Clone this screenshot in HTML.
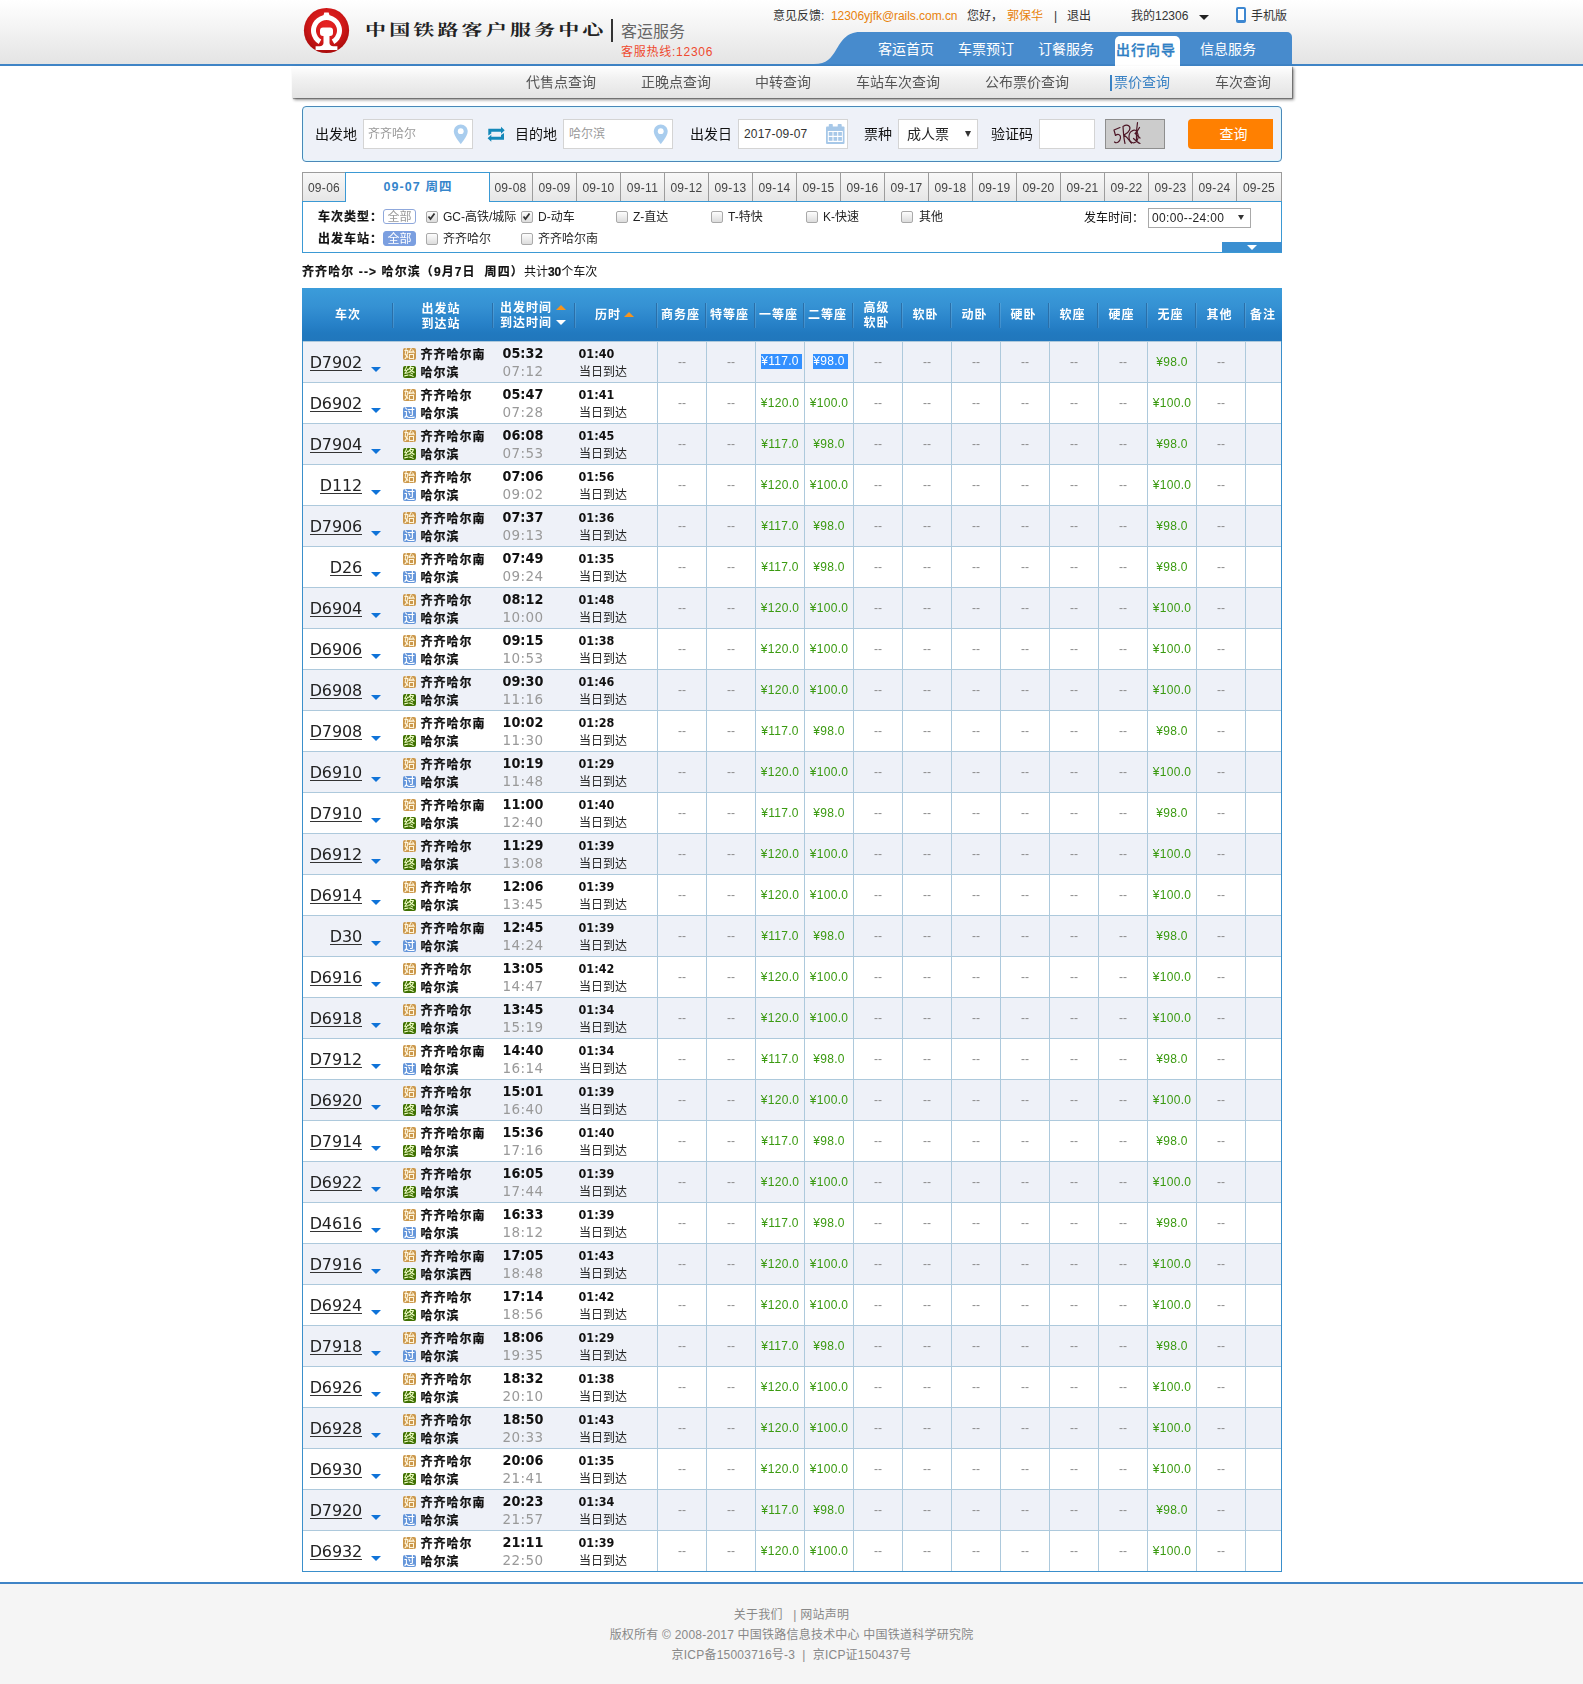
<!DOCTYPE html>
<html lang="zh-CN">
<head>
<meta charset="utf-8">
<title>票价查询 | 客运服务 | 铁路客户服务中心</title>
<style>
*{box-sizing:border-box}
html,body{margin:0;padding:0}
body{width:1583px;height:1684px;position:relative;background:#fff;overflow:hidden;
 font-family:"Liberation Sans","Noto Sans CJK SC",sans-serif;font-size:12px;line-height:18px;color:#333;opacity:.9999}
a{color:inherit;text-decoration:none}
.abs{position:absolute}
/* header */
#hd{position:absolute;left:0;top:0;width:1583px;height:64px;background:linear-gradient(#fff 0,#f6f6f6 35%,#ececec 70%,#e4e4e4 100%)}
#hdline{position:absolute;left:0;top:64px;width:1583px;height:2px;background:#3f84c6}
#logo{position:absolute;left:303px;top:7px}
#title{position:absolute;left:365px;top:18px;font-family:"Liberation Serif","Noto Serif CJK SC",serif;font-weight:700;font-size:15px;line-height:24px;letter-spacing:2.25px;color:#222;white-space:nowrap;transform-origin:0 50%;transform:scaleX(1.4)}
#tsep{position:absolute;left:611px;top:19px;width:2px;height:23px;background:#333}
#kyfw{position:absolute;left:621px;top:22px;font-size:16px;line-height:20px;color:#666;white-space:nowrap}
#hot{position:absolute;left:621px;top:44px;font-size:12px;line-height:16px;color:#ef4a2f;white-space:nowrap;letter-spacing:.75px}
#top{position:absolute;top:8px;left:0;width:1583px;height:16px;font-size:12px;line-height:16px;color:#333;white-space:nowrap}
#top span{position:absolute;top:0}
.org{color:#e8820c}
/* main nav */
#nav{position:absolute;left:810px;top:32px}
#navt{position:absolute;left:0;top:32px;width:1583px;height:32px;font-size:14px;line-height:32px;color:#fff;white-space:nowrap}
#navt span{position:absolute;top:1px}
#navon{position:absolute;left:1115px;top:36px;width:65px;-webkit-text-stroke:.3px #2f7fc4;height:30px;background:#fff;border-radius:5px 5px 0 0;color:#2f7fc4;font-size:14px;line-height:28px;text-align:center;font-weight:500;letter-spacing:1px;padding-right:3px}
/* sub nav */
#sub{position:absolute;left:292px;top:66px;width:1000px;height:32px;background:linear-gradient(#fff 0,#f1f1f1 40%,#e3e3e3 100%);box-shadow:1px 1px 1px rgba(0,0,0,.32),2px 2px 3px rgba(0,0,0,.42);font-size:14px;line-height:32px;color:#555;white-space:nowrap}
#sub span{position:absolute;top:0}
#sub .on{color:#3a82c4}
#sub i{position:absolute;left:818px;top:9px;width:2px;height:16px;background:#3a82c4}
/* search */
#sch{position:absolute;left:302px;top:106px;width:980px;height:56px;border:1px solid #4a88b8;border-radius:4px;background:#eef1f8;box-shadow:inset 0 0 0 1px #dcf7ff}
#sch .lb{position:absolute;top:18px;font-size:14px;line-height:18px;color:#111;white-space:nowrap}
#sch .ip{position:absolute;top:12px;height:30px;background:#fff;border:1px solid #d4d4d4;font-size:12px;line-height:28px;color:#999;padding-left:5px;white-space:nowrap}
#btn{position:absolute;left:885px;top:12px;width:85px;height:30px;background:#ff8000;border-radius:4px 0 0 4px;color:#fff;font-size:14px;line-height:30px;text-align:center;padding-left:6px}
/* date tabs */
#tabs{position:absolute;left:302px;top:172px;width:980px;height:29px}
#tabs div{position:absolute;top:0;height:29px;border:1px solid #9c9c9c;border-bottom:none;border-left:none;background:linear-gradient(#f8f8f8,#e6e6e6);font-size:12px;line-height:30px;text-align:center;color:#444;letter-spacing:.3px}
#tabs .on{top:0;height:30px;font-size:12.5px;letter-spacing:1.1px;line-height:29px;border:1px solid #3b99d4;border-bottom:none;background:#fff;color:#3585cb;font-weight:bold;z-index:2}
/* filter */
#flt{position:absolute;left:302px;top:201px;width:980px;height:52px;border:1px solid #3b99d4;background:#fff}
#flt span{position:absolute;white-space:nowrap;line-height:14px;font-size:12px;color:#222}
#flt b{position:absolute;white-space:nowrap;line-height:14px;font-size:12px;color:#111;letter-spacing:1px;-webkit-text-stroke:.2px #111}
#flt .cb{position:absolute;width:12px;height:12px;border:1px solid #a9a9a9;border-radius:2px;background:linear-gradient(#fdfdfd,#dcdcdc)}
#flt .all{position:absolute;width:32px;height:15px;border-radius:3px;font-size:12px;line-height:14.5px;text-align:center}
#more{position:absolute;left:919px;top:40px;width:60px;height:10px;background:#3b8fd1}
#more i{position:absolute;left:25px;top:3px;border:5px solid transparent;border-top:5px solid #fff;border-bottom:none}
#sum{position:absolute;left:302px;top:263.5px;font-size:12px;line-height:16px;color:#111;white-space:nowrap}
#sum b{letter-spacing:1.1px;-webkit-text-stroke:.2px #111}
/* table */
#th{position:absolute;left:302px;top:288px;width:980px;height:53px;background:linear-gradient(#3b9cda 0,#3591d3 35%,#2781c8 68%,#2179bf 85%,#2177bc 100%);color:#fff;font-weight:bold;font-size:12px;line-height:15px}
#th div{position:absolute;text-align:center;white-space:nowrap;letter-spacing:1px}
#th s{position:absolute;top:15px;width:1px;height:25px;background:#2a6fa8;box-shadow:1px 0 0 rgba(255,255,255,.12)}
#th i{position:absolute;border:4px solid transparent}
#tb{position:absolute;left:302px;top:341px;width:980px;height:1231px;border-left:1px solid #3a8fcb;border-right:1px solid #3a8fcb;border-bottom:1px solid #3a8fcb}
.r{position:absolute;left:0;width:978px;height:41px;border-top:1px solid #adc9dc;background:#fff}
.r.o{background:#eef1f8}
.r a{position:absolute;right:919px;top:8px;height:21px;border-bottom:1px solid #333;font-family:"DejaVu Sans","Liberation Sans",sans-serif;font-size:16px;letter-spacing:-.15px;line-height:25px;color:#222;white-space:nowrap}
.r a span{display:inline-block}
.r u{position:absolute;left:68px;top:25px;border:5px solid transparent;border-top:5px solid #0f73d8;border-bottom:none}
.r em{position:absolute;left:100px;width:13px;height:12px;border-radius:2px;font-style:normal;font-size:11px;font-weight:500;line-height:12px;color:#fff;text-align:center;overflow:hidden}
.r em.s{top:6px;background:#cb984c;color:#fff6dc}
.r em.z{top:24px;background:#3f7000;color:#f2ffc8}
.r em.g{top:24px;background:#6596da}
.r b{position:absolute;left:117.5px;font-size:12px;line-height:14px;letter-spacing:1px;color:#111;white-space:nowrap;-webkit-text-stroke:.25px #111}
.r .t1{position:absolute;left:199.5px;top:4px;font-family:"DejaVu Sans","Liberation Sans",sans-serif;font-weight:bold;font-size:12.85px;line-height:16px;letter-spacing:0;color:#111;transform-origin:0 50%;transform:scaleY(1.05)}
.r .t2{position:absolute;left:199.5px;top:20px;font-family:"DejaVu Sans","Liberation Sans",sans-serif;font-size:13.5px;line-height:18px;letter-spacing:.42px;color:#999}
.r .d1{position:absolute;left:275.5px;top:5px;font-family:"DejaVu Sans","Liberation Sans",sans-serif;font-weight:bold;font-size:11.25px;line-height:16px;letter-spacing:0;color:#111;transform-origin:0 50%;transform:scaleY(1.05)}
.r .d2{position:absolute;left:276px;top:22px;font-size:12px;line-height:16px;color:#222}
.r p{position:absolute;top:0;margin:0;width:49px;height:40px;border-left:1px solid #adc9dc;text-align:center;font-size:12px;line-height:40px;color:#8c8c8c;white-space:nowrap}
.r p.g{color:#3a9a10;letter-spacing:.3px}
.r p.n{width:36px}
.r mark{display:inline-block;vertical-align:top;margin:12px -3px 0 0;height:15px;line-height:15px;padding-right:3px;background:#3390ff;color:#fff}
/* footer */
#ft{position:absolute;left:0;top:1582px;width:1583px;height:102px;border-top:2px solid #3f84c6;background:#f5f5f5;color:#888;font-size:12px;line-height:20px;text-align:center;letter-spacing:.22px}
</style>
</head>
<body>
<div id="hd"></div>
<div id="hdline"></div>
<svg id="logo" width="48" height="48" viewBox="0 0 48 48">
<defs><radialGradient id="lg" cx="50%" cy="38%" r="62%"><stop offset="0" stop-color="#e82525"/><stop offset=".6" stop-color="#d01818"/><stop offset="1" stop-color="#a90c0c"/></radialGradient></defs>
<circle cx="23.500" cy="23.500" r="22.600" fill="url(#lg)"/>
<path d="M15.750 36.920A15.500 15.500 0 1 1 31.250 36.920L28.750 32.590A10.500 10.500 0 1 0 18.250 32.590Z" fill="#fff"/>
<path d="M20.300 9 21.300 5.600H25.700L26.700 9Z" fill="#fff"/>
<path d="M20 20.400h7a3 3 0 0 1 3 3v2.600a3 3 0 0 1-3 3h-.5v7c0 1.800 1.600 3.200 3.800 3.200h4.100V43H12.600v-3.800h4.100c2.200 0 3.800-1.400 3.800-3.200v-7H20a3 3 0 0 1-3-3v-2.600a3 3 0 0 1 3-3z" fill="#fff"/>
</svg>
<div id="title">中国铁路客户服务中心</div>
<div id="tsep"></div>
<div id="kyfw">客运服务</div>
<div id="hot">客服热线:12306</div>
<div id="top">
<span style="left:773px">意见反馈:</span>
<span class="org" style="left:831px;letter-spacing:-.05px">12306yjfk@rails.com.cn</span>
<span style="left:967px">您好，</span>
<span class="org" style="left:1007px">郭保华</span>
<span style="left:1054px">|</span>
<span style="left:1067px">退出</span>
<span style="left:1131px">我的12306</span>
<span style="left:1199px;top:7px;border:5px solid transparent;border-top:5px solid #222;border-bottom:none"></span>
<span style="left:1236px;top:-1px;width:10px;height:16px;border:2px solid #3d87d1;border-bottom-width:3px;border-radius:2px;background:#fff"></span>
<span style="left:1251px">手机版</span>
</div>
<svg id="nav" width="483" height="32" viewBox="0 0 483 32"><path d="M4 32C17 32 21 26 26 18S36 0 50 0H477a5 5 0 0 1 5 5V32z" fill="#478bcd"/></svg>
<div id="navt">
<span style="left:878px">客运首页</span>
<span style="left:958px">车票预订</span>
<span style="left:1038px">订餐服务</span>
<span style="left:1200px">信息服务</span>
</div>
<div id="navon">出行向导</div>
<div id="sub">
<span style="left:234px">代售点查询</span>
<span style="left:349px">正晚点查询</span>
<span style="left:463px">中转查询</span>
<span style="left:564px">车站车次查询</span>
<span style="left:693px">公布票价查询</span>
<i></i>
<span class="on" style="left:822px">票价查询</span>
<span style="left:923px">车次查询</span>
</div>
<div id="sch">
<span class="lb" style="left:12px">出发地</span>
<div class="ip" style="left:60px;width:110px;padding-left:4px">齐齐哈尔</div>
<svg class="abs" style="left:150px;top:16.800px" width="15.500" height="20.600" viewBox="0 0 16 22"><path d="M8 .5C3.900 .5 .6 3.800 .6 7.900c0 5.200 7.400 13.400 7.400 13.400s7.400-8.200 7.400-13.400C15.400 3.800 12.100 .5 8 .5z" fill="#a9cdee"/><circle cx="8" cy="7.700" r="3.100" fill="#fff"/></svg>
<svg class="abs" style="left:184px;top:19px" width="18" height="16" viewBox="0 0 18 16"><path d="M1.300 2.800H14V.8L17.700 4.300 14 7.800V5.800H4.300V7.500L1.300 9.500Z" fill="#1488b9"/><path d="M17 13.700H4.300v2L.6 12.200 4.300 8.700v2H14V9l3-2Z" fill="#1488b9"/></svg>
<span class="lb" style="left:212px">目的地</span>
<div class="ip" style="left:260px;width:110px">哈尔滨</div>
<svg class="abs" style="left:350px;top:16.800px" width="15.500" height="20.600" viewBox="0 0 16 22"><path d="M8 .5C3.900 .5 .6 3.800 .6 7.900c0 5.200 7.400 13.400 7.400 13.400s7.400-8.200 7.400-13.400C15.400 3.800 12.100 .5 8 .5z" fill="#a9cdee"/><circle cx="8" cy="7.700" r="3.100" fill="#fff"/></svg>
<span class="lb" style="left:387px">出发日</span>
<div class="ip" style="left:435px;width:110px;color:#333;letter-spacing:.2px">2017-09-07</div>
<svg class="abs" style="left:523px;top:17px" width="19" height="20" viewBox="0 0 19 20"><rect x="0" y="2.500" width="18.500" height="17.500" rx="1" fill="#a7c8e8"/><rect x="2.800" y="0" width="4" height="5" rx=".8" fill="#a7c8e8"/><rect x="11.700" y="0" width="4" height="5" rx=".8" fill="#a7c8e8"/><rect x="1.800" y="7" width="15" height="11" fill="#fff"/><g fill="#a7c8e8"><rect x="2.800" y="8" width="3.700" height="3.800"/><rect x="7.500" y="8" width="3.700" height="3.800"/><rect x="12.200" y="8" width="3.700" height="3.800"/><rect x="2.800" y="13" width="3.700" height="3.800"/><rect x="7.500" y="13" width="3.700" height="3.800"/><rect x="12.200" y="13" width="3.700" height="3.800"/></g></svg>
<span class="lb" style="left:561px">票种</span>
<div class="ip" style="left:595px;width:80px;color:#222;font-size:14px;padding-left:8px">成人票<i class="abs" style="left:66px;top:11px;border:3.500px solid transparent;border-top:6px solid #333;border-bottom:none"></i></div>
<span class="lb" style="left:688px">验证码</span>
<div class="ip" style="left:736px;width:56px"></div>
<svg class="abs" style="left:802px;top:12px" width="60" height="30" viewBox="0 0 60 30"><rect x=".5" y=".5" width="59" height="29" fill="#cccccc" stroke="#8e8e8e"/><g fill="none" stroke="#4d1626" stroke-width="1.200" stroke-linecap="round" stroke-linejoin="round"><path d="M15 8.500 9 11l1.500 5.500c2.500-2 5.500-1 5 2.500s-3.500 6-6 4"/><path d="M18 7.500c.5 6 .5 11 2 17M18 7.500c5-3 8 0 6.500 3.500s-5 4.500-5.500 5c3 2 5 5 7.500 8"/><path d="M27 12c-4 2-4 10 0 11.500s7-3 6-8-4-5-6-3.500M28.500 19.500c2 2 4 4 6.500 5"/><path d="M32.500 3.500c-1 6-1.500 12-1 18M34.500 8.500c-1.500 3-3 5-4.500 6 2 1 3.500 3 5 4.500"/></g></svg>
<div id="btn">查询</div>
</div>
<div id="tabs">
<div style="left:0;width:44px;border-left:1px solid #9c9c9c">09-06</div>
<div class="on" style="left:43px;width:145px"><span style="position:relative;left:.5px">09-07 周四</span></div>
<div style="left:187px;width:44px">09-08</div>
<div style="left:231px;width:44px">09-09</div>
<div style="left:275px;width:44px">09-10</div>
<div style="left:319px;width:44px">09-11</div>
<div style="left:363px;width:44px">09-12</div>
<div style="left:407px;width:44px">09-13</div>
<div style="left:451px;width:44px">09-14</div>
<div style="left:495px;width:44px">09-15</div>
<div style="left:539px;width:44px">09-16</div>
<div style="left:583px;width:44px">09-17</div>
<div style="left:627px;width:44px">09-18</div>
<div style="left:671px;width:44px">09-19</div>
<div style="left:715px;width:44px">09-20</div>
<div style="left:759px;width:44px">09-21</div>
<div style="left:803px;width:44px">09-22</div>
<div style="left:847px;width:44px">09-23</div>
<div style="left:891px;width:44px">09-24</div>
<div style="left:935px;width:45px">09-25</div>
</div>
<div id="flt">
<b style="left:15px;top:8px">车次类型：</b>
<div class="all" style="left:80px;top:7px;width:33px;border:1px solid #8fa8dc;color:#999;background:#fff">全部</div>
<i class="cb" style="left:123px;top:9px"><svg class="abs" style="left:0;top:0" width="9" height="9" viewBox="0 0 9 9"><path d="M1.500 4.500l2 2.500L7.500 1.500" fill="none" stroke="#333" stroke-width="1.800"/></svg></i><span style="left:140px;top:8px">GC-高铁/城际</span>
<i class="cb" style="left:218px;top:9px"><svg class="abs" style="left:0;top:0" width="9" height="9" viewBox="0 0 9 9"><path d="M1.500 4.500l2 2.500L7.500 1.500" fill="none" stroke="#333" stroke-width="1.800"/></svg></i><span style="left:235px;top:8px">D-动车</span>
<i class="cb" style="left:313px;top:9px"></i><span style="left:330px;top:8px">Z-直达</span>
<i class="cb" style="left:408px;top:9px"></i><span style="left:425px;top:8px">T-特快</span>
<i class="cb" style="left:503px;top:9px"></i><span style="left:520px;top:8px">K-快速</span>
<i class="cb" style="left:598px;top:9px"></i><span style="left:616px;top:8px">其他</span>
<span style="left:781px;top:8.5px;color:#111">发车时间：</span>
<div class="abs" style="left:845px;top:6px;width:103px;height:20px;border:1px solid #a9a9a9;background:#fff;font-size:12px;line-height:18px;padding-left:3px;color:#222;letter-spacing:.35px">00:00--24:00<i class="abs" style="left:89px;top:6px;border:3.500px solid transparent;border-top:5.500px solid #333;border-bottom:none"></i></div>
<b style="left:15px;top:30px">出发车站：</b>
<div class="all" style="left:80px;top:29px;width:33px;border:1px solid #7b9fe0;color:#fff;background:#7b9fe0">全部</div>
<i class="cb" style="left:123px;top:31px"></i><span style="left:140px;top:30px">齐齐哈尔</span>
<i class="cb" style="left:218px;top:31px"></i><span style="left:235px;top:30px">齐齐哈尔南</span>
<div id="more"><i></i></div>
</div>
<div id="sum"><b>齐齐哈尔 --&gt; 哈尔滨（9月7日 &nbsp;周四）</b>共计<b style="letter-spacing:0">30</b>个车次</div>
<div id="th">
<s style="left:90px"></s><s style="left:190px"></s><s style="left:272px"></s><s style="left:354px"></s><s style="left:403px"></s><s style="left:452px"></s><s style="left:501px"></s><s style="left:550px"></s><s style="left:599px"></s><s style="left:648px"></s><s style="left:697px"></s><s style="left:746px"></s><s style="left:795px"></s><s style="left:844px"></s><s style="left:893px"></s><s style="left:942px"></s>
<div style="left:1px;width:90px;top:20px">车次</div>
<div style="left:89px;width:100px;top:13.5px">出发站<br>到达站</div>
<div style="left:198px;top:13px;text-align:left">出发时间<br>到达时间</div>
<i style="left:254px;top:17px;border-bottom:5px solid #f7941d;border-top:none;border-left-width:5px;border-right-width:5px"></i>
<i style="left:254px;top:32px;border-top:5px solid #fff;border-bottom:none;border-left-width:5px;border-right-width:5px"></i>
<div style="left:293px;top:20px;text-align:left">历时</div>
<i style="left:322px;top:24px;border-bottom:5px solid #f7941d;border-top:none;border-left-width:5px;border-right-width:5px"></i>
<div style="left:354px;width:49px;top:20px">商务座</div>
<div style="left:403px;width:49px;top:20px">特等座</div>
<div style="left:452px;width:49px;top:20px">一等座</div>
<div style="left:501px;width:49px;top:20px">二等座</div>
<div style="left:550px;width:49px;top:13px">高级<br>软卧</div>
<div style="left:599px;width:49px;top:20px">软卧</div>
<div style="left:648px;width:49px;top:20px">动卧</div>
<div style="left:697px;width:49px;top:20px">硬卧</div>
<div style="left:746px;width:49px;top:20px">软座</div>
<div style="left:795px;width:49px;top:20px">硬座</div>
<div style="left:844px;width:49px;top:20px">无座</div>
<div style="left:893px;width:49px;top:20px">其他</div>
<div style="left:942px;width:38px;top:20px">备注</div>
</div>
<div id="tb">
<div class="r o" style="top:0px"><a><span>D7902</span></a><u></u><em class="s">始</em><b style="top:6px">齐齐哈尔南</b><em class="z">终</em><b style="top:24px">哈尔滨</b><span class="t1">05:32</span><span class="t2">07:12</span><span class="d1">01:40</span><span class="d2">当日到达</span><p style="left:354px">--</p><p style="left:403px">--</p><p class="g" style="left:452px"><mark>¥117.0</mark></p><p class="g" style="left:501px"><mark>¥98.0</mark></p><p style="left:550px">--</p><p style="left:599px">--</p><p style="left:648px">--</p><p style="left:697px">--</p><p style="left:746px">--</p><p style="left:795px">--</p><p class="g" style="left:844px">¥98.0</p><p style="left:893px">--</p><p class="n" style="left:942px"></p></div>
<div class="r" style="top:41px"><a><span>D6902</span></a><u></u><em class="s">始</em><b style="top:6px">齐齐哈尔</b><em class="g">过</em><b style="top:24px">哈尔滨</b><span class="t1">05:47</span><span class="t2">07:28</span><span class="d1">01:41</span><span class="d2">当日到达</span><p style="left:354px">--</p><p style="left:403px">--</p><p class="g" style="left:452px">¥120.0</p><p class="g" style="left:501px">¥100.0</p><p style="left:550px">--</p><p style="left:599px">--</p><p style="left:648px">--</p><p style="left:697px">--</p><p style="left:746px">--</p><p style="left:795px">--</p><p class="g" style="left:844px">¥100.0</p><p style="left:893px">--</p><p class="n" style="left:942px"></p></div>
<div class="r o" style="top:82px"><a><span>D7904</span></a><u></u><em class="s">始</em><b style="top:6px">齐齐哈尔南</b><em class="z">终</em><b style="top:24px">哈尔滨</b><span class="t1">06:08</span><span class="t2">07:53</span><span class="d1">01:45</span><span class="d2">当日到达</span><p style="left:354px">--</p><p style="left:403px">--</p><p class="g" style="left:452px">¥117.0</p><p class="g" style="left:501px">¥98.0</p><p style="left:550px">--</p><p style="left:599px">--</p><p style="left:648px">--</p><p style="left:697px">--</p><p style="left:746px">--</p><p style="left:795px">--</p><p class="g" style="left:844px">¥98.0</p><p style="left:893px">--</p><p class="n" style="left:942px"></p></div>
<div class="r" style="top:123px"><a><span>D112</span></a><u></u><em class="s">始</em><b style="top:6px">齐齐哈尔</b><em class="g">过</em><b style="top:24px">哈尔滨</b><span class="t1">07:06</span><span class="t2">09:02</span><span class="d1">01:56</span><span class="d2">当日到达</span><p style="left:354px">--</p><p style="left:403px">--</p><p class="g" style="left:452px">¥120.0</p><p class="g" style="left:501px">¥100.0</p><p style="left:550px">--</p><p style="left:599px">--</p><p style="left:648px">--</p><p style="left:697px">--</p><p style="left:746px">--</p><p style="left:795px">--</p><p class="g" style="left:844px">¥100.0</p><p style="left:893px">--</p><p class="n" style="left:942px"></p></div>
<div class="r o" style="top:164px"><a><span>D7906</span></a><u></u><em class="s">始</em><b style="top:6px">齐齐哈尔南</b><em class="g">过</em><b style="top:24px">哈尔滨</b><span class="t1">07:37</span><span class="t2">09:13</span><span class="d1">01:36</span><span class="d2">当日到达</span><p style="left:354px">--</p><p style="left:403px">--</p><p class="g" style="left:452px">¥117.0</p><p class="g" style="left:501px">¥98.0</p><p style="left:550px">--</p><p style="left:599px">--</p><p style="left:648px">--</p><p style="left:697px">--</p><p style="left:746px">--</p><p style="left:795px">--</p><p class="g" style="left:844px">¥98.0</p><p style="left:893px">--</p><p class="n" style="left:942px"></p></div>
<div class="r" style="top:205px"><a><span>D26</span></a><u></u><em class="s">始</em><b style="top:6px">齐齐哈尔南</b><em class="g">过</em><b style="top:24px">哈尔滨</b><span class="t1">07:49</span><span class="t2">09:24</span><span class="d1">01:35</span><span class="d2">当日到达</span><p style="left:354px">--</p><p style="left:403px">--</p><p class="g" style="left:452px">¥117.0</p><p class="g" style="left:501px">¥98.0</p><p style="left:550px">--</p><p style="left:599px">--</p><p style="left:648px">--</p><p style="left:697px">--</p><p style="left:746px">--</p><p style="left:795px">--</p><p class="g" style="left:844px">¥98.0</p><p style="left:893px">--</p><p class="n" style="left:942px"></p></div>
<div class="r o" style="top:246px"><a><span>D6904</span></a><u></u><em class="s">始</em><b style="top:6px">齐齐哈尔</b><em class="g">过</em><b style="top:24px">哈尔滨</b><span class="t1">08:12</span><span class="t2">10:00</span><span class="d1">01:48</span><span class="d2">当日到达</span><p style="left:354px">--</p><p style="left:403px">--</p><p class="g" style="left:452px">¥120.0</p><p class="g" style="left:501px">¥100.0</p><p style="left:550px">--</p><p style="left:599px">--</p><p style="left:648px">--</p><p style="left:697px">--</p><p style="left:746px">--</p><p style="left:795px">--</p><p class="g" style="left:844px">¥100.0</p><p style="left:893px">--</p><p class="n" style="left:942px"></p></div>
<div class="r" style="top:287px"><a><span>D6906</span></a><u></u><em class="s">始</em><b style="top:6px">齐齐哈尔</b><em class="g">过</em><b style="top:24px">哈尔滨</b><span class="t1">09:15</span><span class="t2">10:53</span><span class="d1">01:38</span><span class="d2">当日到达</span><p style="left:354px">--</p><p style="left:403px">--</p><p class="g" style="left:452px">¥120.0</p><p class="g" style="left:501px">¥100.0</p><p style="left:550px">--</p><p style="left:599px">--</p><p style="left:648px">--</p><p style="left:697px">--</p><p style="left:746px">--</p><p style="left:795px">--</p><p class="g" style="left:844px">¥100.0</p><p style="left:893px">--</p><p class="n" style="left:942px"></p></div>
<div class="r o" style="top:328px"><a><span>D6908</span></a><u></u><em class="s">始</em><b style="top:6px">齐齐哈尔</b><em class="z">终</em><b style="top:24px">哈尔滨</b><span class="t1">09:30</span><span class="t2">11:16</span><span class="d1">01:46</span><span class="d2">当日到达</span><p style="left:354px">--</p><p style="left:403px">--</p><p class="g" style="left:452px">¥120.0</p><p class="g" style="left:501px">¥100.0</p><p style="left:550px">--</p><p style="left:599px">--</p><p style="left:648px">--</p><p style="left:697px">--</p><p style="left:746px">--</p><p style="left:795px">--</p><p class="g" style="left:844px">¥100.0</p><p style="left:893px">--</p><p class="n" style="left:942px"></p></div>
<div class="r" style="top:369px"><a><span>D7908</span></a><u></u><em class="s">始</em><b style="top:6px">齐齐哈尔南</b><em class="z">终</em><b style="top:24px">哈尔滨</b><span class="t1">10:02</span><span class="t2">11:30</span><span class="d1">01:28</span><span class="d2">当日到达</span><p style="left:354px">--</p><p style="left:403px">--</p><p class="g" style="left:452px">¥117.0</p><p class="g" style="left:501px">¥98.0</p><p style="left:550px">--</p><p style="left:599px">--</p><p style="left:648px">--</p><p style="left:697px">--</p><p style="left:746px">--</p><p style="left:795px">--</p><p class="g" style="left:844px">¥98.0</p><p style="left:893px">--</p><p class="n" style="left:942px"></p></div>
<div class="r o" style="top:410px"><a><span>D6910</span></a><u></u><em class="s">始</em><b style="top:6px">齐齐哈尔</b><em class="g">过</em><b style="top:24px">哈尔滨</b><span class="t1">10:19</span><span class="t2">11:48</span><span class="d1">01:29</span><span class="d2">当日到达</span><p style="left:354px">--</p><p style="left:403px">--</p><p class="g" style="left:452px">¥120.0</p><p class="g" style="left:501px">¥100.0</p><p style="left:550px">--</p><p style="left:599px">--</p><p style="left:648px">--</p><p style="left:697px">--</p><p style="left:746px">--</p><p style="left:795px">--</p><p class="g" style="left:844px">¥100.0</p><p style="left:893px">--</p><p class="n" style="left:942px"></p></div>
<div class="r" style="top:451px"><a><span>D7910</span></a><u></u><em class="s">始</em><b style="top:6px">齐齐哈尔南</b><em class="z">终</em><b style="top:24px">哈尔滨</b><span class="t1">11:00</span><span class="t2">12:40</span><span class="d1">01:40</span><span class="d2">当日到达</span><p style="left:354px">--</p><p style="left:403px">--</p><p class="g" style="left:452px">¥117.0</p><p class="g" style="left:501px">¥98.0</p><p style="left:550px">--</p><p style="left:599px">--</p><p style="left:648px">--</p><p style="left:697px">--</p><p style="left:746px">--</p><p style="left:795px">--</p><p class="g" style="left:844px">¥98.0</p><p style="left:893px">--</p><p class="n" style="left:942px"></p></div>
<div class="r o" style="top:492px"><a><span>D6912</span></a><u></u><em class="s">始</em><b style="top:6px">齐齐哈尔</b><em class="z">终</em><b style="top:24px">哈尔滨</b><span class="t1">11:29</span><span class="t2">13:08</span><span class="d1">01:39</span><span class="d2">当日到达</span><p style="left:354px">--</p><p style="left:403px">--</p><p class="g" style="left:452px">¥120.0</p><p class="g" style="left:501px">¥100.0</p><p style="left:550px">--</p><p style="left:599px">--</p><p style="left:648px">--</p><p style="left:697px">--</p><p style="left:746px">--</p><p style="left:795px">--</p><p class="g" style="left:844px">¥100.0</p><p style="left:893px">--</p><p class="n" style="left:942px"></p></div>
<div class="r" style="top:533px"><a><span>D6914</span></a><u></u><em class="s">始</em><b style="top:6px">齐齐哈尔</b><em class="z">终</em><b style="top:24px">哈尔滨</b><span class="t1">12:06</span><span class="t2">13:45</span><span class="d1">01:39</span><span class="d2">当日到达</span><p style="left:354px">--</p><p style="left:403px">--</p><p class="g" style="left:452px">¥120.0</p><p class="g" style="left:501px">¥100.0</p><p style="left:550px">--</p><p style="left:599px">--</p><p style="left:648px">--</p><p style="left:697px">--</p><p style="left:746px">--</p><p style="left:795px">--</p><p class="g" style="left:844px">¥100.0</p><p style="left:893px">--</p><p class="n" style="left:942px"></p></div>
<div class="r o" style="top:574px"><a><span>D30</span></a><u></u><em class="s">始</em><b style="top:6px">齐齐哈尔南</b><em class="g">过</em><b style="top:24px">哈尔滨</b><span class="t1">12:45</span><span class="t2">14:24</span><span class="d1">01:39</span><span class="d2">当日到达</span><p style="left:354px">--</p><p style="left:403px">--</p><p class="g" style="left:452px">¥117.0</p><p class="g" style="left:501px">¥98.0</p><p style="left:550px">--</p><p style="left:599px">--</p><p style="left:648px">--</p><p style="left:697px">--</p><p style="left:746px">--</p><p style="left:795px">--</p><p class="g" style="left:844px">¥98.0</p><p style="left:893px">--</p><p class="n" style="left:942px"></p></div>
<div class="r" style="top:615px"><a><span>D6916</span></a><u></u><em class="s">始</em><b style="top:6px">齐齐哈尔</b><em class="z">终</em><b style="top:24px">哈尔滨</b><span class="t1">13:05</span><span class="t2">14:47</span><span class="d1">01:42</span><span class="d2">当日到达</span><p style="left:354px">--</p><p style="left:403px">--</p><p class="g" style="left:452px">¥120.0</p><p class="g" style="left:501px">¥100.0</p><p style="left:550px">--</p><p style="left:599px">--</p><p style="left:648px">--</p><p style="left:697px">--</p><p style="left:746px">--</p><p style="left:795px">--</p><p class="g" style="left:844px">¥100.0</p><p style="left:893px">--</p><p class="n" style="left:942px"></p></div>
<div class="r o" style="top:656px"><a><span>D6918</span></a><u></u><em class="s">始</em><b style="top:6px">齐齐哈尔</b><em class="z">终</em><b style="top:24px">哈尔滨</b><span class="t1">13:45</span><span class="t2">15:19</span><span class="d1">01:34</span><span class="d2">当日到达</span><p style="left:354px">--</p><p style="left:403px">--</p><p class="g" style="left:452px">¥120.0</p><p class="g" style="left:501px">¥100.0</p><p style="left:550px">--</p><p style="left:599px">--</p><p style="left:648px">--</p><p style="left:697px">--</p><p style="left:746px">--</p><p style="left:795px">--</p><p class="g" style="left:844px">¥100.0</p><p style="left:893px">--</p><p class="n" style="left:942px"></p></div>
<div class="r" style="top:697px"><a><span>D7912</span></a><u></u><em class="s">始</em><b style="top:6px">齐齐哈尔南</b><em class="g">过</em><b style="top:24px">哈尔滨</b><span class="t1">14:40</span><span class="t2">16:14</span><span class="d1">01:34</span><span class="d2">当日到达</span><p style="left:354px">--</p><p style="left:403px">--</p><p class="g" style="left:452px">¥117.0</p><p class="g" style="left:501px">¥98.0</p><p style="left:550px">--</p><p style="left:599px">--</p><p style="left:648px">--</p><p style="left:697px">--</p><p style="left:746px">--</p><p style="left:795px">--</p><p class="g" style="left:844px">¥98.0</p><p style="left:893px">--</p><p class="n" style="left:942px"></p></div>
<div class="r o" style="top:738px"><a><span>D6920</span></a><u></u><em class="s">始</em><b style="top:6px">齐齐哈尔</b><em class="z">终</em><b style="top:24px">哈尔滨</b><span class="t1">15:01</span><span class="t2">16:40</span><span class="d1">01:39</span><span class="d2">当日到达</span><p style="left:354px">--</p><p style="left:403px">--</p><p class="g" style="left:452px">¥120.0</p><p class="g" style="left:501px">¥100.0</p><p style="left:550px">--</p><p style="left:599px">--</p><p style="left:648px">--</p><p style="left:697px">--</p><p style="left:746px">--</p><p style="left:795px">--</p><p class="g" style="left:844px">¥100.0</p><p style="left:893px">--</p><p class="n" style="left:942px"></p></div>
<div class="r" style="top:779px"><a><span>D7914</span></a><u></u><em class="s">始</em><b style="top:6px">齐齐哈尔南</b><em class="z">终</em><b style="top:24px">哈尔滨</b><span class="t1">15:36</span><span class="t2">17:16</span><span class="d1">01:40</span><span class="d2">当日到达</span><p style="left:354px">--</p><p style="left:403px">--</p><p class="g" style="left:452px">¥117.0</p><p class="g" style="left:501px">¥98.0</p><p style="left:550px">--</p><p style="left:599px">--</p><p style="left:648px">--</p><p style="left:697px">--</p><p style="left:746px">--</p><p style="left:795px">--</p><p class="g" style="left:844px">¥98.0</p><p style="left:893px">--</p><p class="n" style="left:942px"></p></div>
<div class="r o" style="top:820px"><a><span>D6922</span></a><u></u><em class="s">始</em><b style="top:6px">齐齐哈尔</b><em class="z">终</em><b style="top:24px">哈尔滨</b><span class="t1">16:05</span><span class="t2">17:44</span><span class="d1">01:39</span><span class="d2">当日到达</span><p style="left:354px">--</p><p style="left:403px">--</p><p class="g" style="left:452px">¥120.0</p><p class="g" style="left:501px">¥100.0</p><p style="left:550px">--</p><p style="left:599px">--</p><p style="left:648px">--</p><p style="left:697px">--</p><p style="left:746px">--</p><p style="left:795px">--</p><p class="g" style="left:844px">¥100.0</p><p style="left:893px">--</p><p class="n" style="left:942px"></p></div>
<div class="r" style="top:861px"><a><span>D4616</span></a><u></u><em class="s">始</em><b style="top:6px">齐齐哈尔南</b><em class="g">过</em><b style="top:24px">哈尔滨</b><span class="t1">16:33</span><span class="t2">18:12</span><span class="d1">01:39</span><span class="d2">当日到达</span><p style="left:354px">--</p><p style="left:403px">--</p><p class="g" style="left:452px">¥117.0</p><p class="g" style="left:501px">¥98.0</p><p style="left:550px">--</p><p style="left:599px">--</p><p style="left:648px">--</p><p style="left:697px">--</p><p style="left:746px">--</p><p style="left:795px">--</p><p class="g" style="left:844px">¥98.0</p><p style="left:893px">--</p><p class="n" style="left:942px"></p></div>
<div class="r o" style="top:902px"><a><span>D7916</span></a><u></u><em class="s">始</em><b style="top:6px">齐齐哈尔南</b><em class="z">终</em><b style="top:24px">哈尔滨西</b><span class="t1">17:05</span><span class="t2">18:48</span><span class="d1">01:43</span><span class="d2">当日到达</span><p style="left:354px">--</p><p style="left:403px">--</p><p class="g" style="left:452px">¥120.0</p><p class="g" style="left:501px">¥100.0</p><p style="left:550px">--</p><p style="left:599px">--</p><p style="left:648px">--</p><p style="left:697px">--</p><p style="left:746px">--</p><p style="left:795px">--</p><p class="g" style="left:844px">¥100.0</p><p style="left:893px">--</p><p class="n" style="left:942px"></p></div>
<div class="r" style="top:943px"><a><span>D6924</span></a><u></u><em class="s">始</em><b style="top:6px">齐齐哈尔</b><em class="z">终</em><b style="top:24px">哈尔滨</b><span class="t1">17:14</span><span class="t2">18:56</span><span class="d1">01:42</span><span class="d2">当日到达</span><p style="left:354px">--</p><p style="left:403px">--</p><p class="g" style="left:452px">¥120.0</p><p class="g" style="left:501px">¥100.0</p><p style="left:550px">--</p><p style="left:599px">--</p><p style="left:648px">--</p><p style="left:697px">--</p><p style="left:746px">--</p><p style="left:795px">--</p><p class="g" style="left:844px">¥100.0</p><p style="left:893px">--</p><p class="n" style="left:942px"></p></div>
<div class="r o" style="top:984px"><a><span>D7918</span></a><u></u><em class="s">始</em><b style="top:6px">齐齐哈尔南</b><em class="g">过</em><b style="top:24px">哈尔滨</b><span class="t1">18:06</span><span class="t2">19:35</span><span class="d1">01:29</span><span class="d2">当日到达</span><p style="left:354px">--</p><p style="left:403px">--</p><p class="g" style="left:452px">¥117.0</p><p class="g" style="left:501px">¥98.0</p><p style="left:550px">--</p><p style="left:599px">--</p><p style="left:648px">--</p><p style="left:697px">--</p><p style="left:746px">--</p><p style="left:795px">--</p><p class="g" style="left:844px">¥98.0</p><p style="left:893px">--</p><p class="n" style="left:942px"></p></div>
<div class="r" style="top:1025px"><a><span>D6926</span></a><u></u><em class="s">始</em><b style="top:6px">齐齐哈尔</b><em class="z">终</em><b style="top:24px">哈尔滨</b><span class="t1">18:32</span><span class="t2">20:10</span><span class="d1">01:38</span><span class="d2">当日到达</span><p style="left:354px">--</p><p style="left:403px">--</p><p class="g" style="left:452px">¥120.0</p><p class="g" style="left:501px">¥100.0</p><p style="left:550px">--</p><p style="left:599px">--</p><p style="left:648px">--</p><p style="left:697px">--</p><p style="left:746px">--</p><p style="left:795px">--</p><p class="g" style="left:844px">¥100.0</p><p style="left:893px">--</p><p class="n" style="left:942px"></p></div>
<div class="r o" style="top:1066px"><a><span>D6928</span></a><u></u><em class="s">始</em><b style="top:6px">齐齐哈尔</b><em class="z">终</em><b style="top:24px">哈尔滨</b><span class="t1">18:50</span><span class="t2">20:33</span><span class="d1">01:43</span><span class="d2">当日到达</span><p style="left:354px">--</p><p style="left:403px">--</p><p class="g" style="left:452px">¥120.0</p><p class="g" style="left:501px">¥100.0</p><p style="left:550px">--</p><p style="left:599px">--</p><p style="left:648px">--</p><p style="left:697px">--</p><p style="left:746px">--</p><p style="left:795px">--</p><p class="g" style="left:844px">¥100.0</p><p style="left:893px">--</p><p class="n" style="left:942px"></p></div>
<div class="r" style="top:1107px"><a><span>D6930</span></a><u></u><em class="s">始</em><b style="top:6px">齐齐哈尔</b><em class="z">终</em><b style="top:24px">哈尔滨</b><span class="t1">20:06</span><span class="t2">21:41</span><span class="d1">01:35</span><span class="d2">当日到达</span><p style="left:354px">--</p><p style="left:403px">--</p><p class="g" style="left:452px">¥120.0</p><p class="g" style="left:501px">¥100.0</p><p style="left:550px">--</p><p style="left:599px">--</p><p style="left:648px">--</p><p style="left:697px">--</p><p style="left:746px">--</p><p style="left:795px">--</p><p class="g" style="left:844px">¥100.0</p><p style="left:893px">--</p><p class="n" style="left:942px"></p></div>
<div class="r o" style="top:1148px"><a><span>D7920</span></a><u></u><em class="s">始</em><b style="top:6px">齐齐哈尔南</b><em class="g">过</em><b style="top:24px">哈尔滨</b><span class="t1">20:23</span><span class="t2">21:57</span><span class="d1">01:34</span><span class="d2">当日到达</span><p style="left:354px">--</p><p style="left:403px">--</p><p class="g" style="left:452px">¥117.0</p><p class="g" style="left:501px">¥98.0</p><p style="left:550px">--</p><p style="left:599px">--</p><p style="left:648px">--</p><p style="left:697px">--</p><p style="left:746px">--</p><p style="left:795px">--</p><p class="g" style="left:844px">¥98.0</p><p style="left:893px">--</p><p class="n" style="left:942px"></p></div>
<div class="r" style="top:1189px"><a><span>D6932</span></a><u></u><em class="s">始</em><b style="top:6px">齐齐哈尔</b><em class="g">过</em><b style="top:24px">哈尔滨</b><span class="t1">21:11</span><span class="t2">22:50</span><span class="d1">01:39</span><span class="d2">当日到达</span><p style="left:354px">--</p><p style="left:403px">--</p><p class="g" style="left:452px">¥120.0</p><p class="g" style="left:501px">¥100.0</p><p style="left:550px">--</p><p style="left:599px">--</p><p style="left:648px">--</p><p style="left:697px">--</p><p style="left:746px">--</p><p style="left:795px">--</p><p class="g" style="left:844px">¥100.0</p><p style="left:893px">--</p><p class="n" style="left:942px"></p></div>
</div>
<div id="ft">
<div style="margin-top:21px">关于我们 &nbsp;&nbsp;| 网站声明</div>
<div>版权所有 © 2008-2017 中国铁路信息技术中心 中国铁道科学研究院</div>
<div>京ICP备15003716号-3 &nbsp;| &nbsp;京ICP证150437号</div>
</div>
</body>
</html>
